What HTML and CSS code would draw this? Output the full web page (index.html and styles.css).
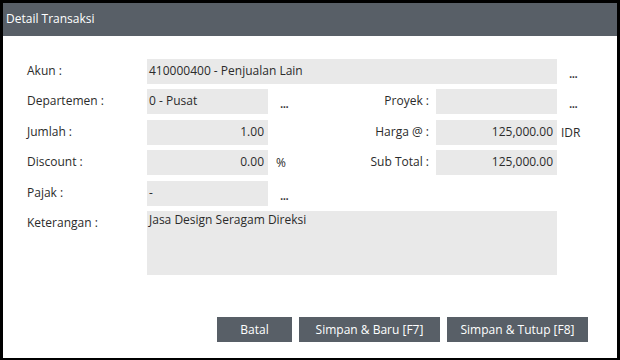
FILE: index.html
```html
<!DOCTYPE html>
<html>
	<head>
		<meta charset="UTF-8">
		<title>Detail Transaksi</title>
		<link rel="stylesheet" href="styles.css">
	</head>
	<body>
		<div class="window">
			<div class="title">Detail Transaksi</div>
			<div class="content">
				<div class="form">
					<label class="lbl">Akun :</label>
					<div class="field wide">410000400 - Penjualan Lain</div>
					<span class="dots">...</span>

					<label class="lbl">Departemen :</label>
					<div class="field">0 - Pusat</div>
					<div class="mid"><span class="dots">...</span><label class="rlbl">Proyek :</label></div>
					<div class="field"></div>
					<span class="dots">...</span>

					<label class="lbl">Jumlah :</label>
					<div class="field num">1.00</div>
					<div class="mid"><span></span><label class="rlbl">Harga @ :</label></div>
					<div class="field num">125,000.00</div>
					<span class="unit">IDR</span>

					<label class="lbl">Discount :</label>
					<div class="field num">0.00</div>
					<div class="mid"><span class="unit pct">%</span><label class="rlbl">Sub Total :</label></div>
					<div class="field num">125,000.00</div>
					<span></span>

					<label class="lbl">Pajak :</label>
					<div class="field">-</div>
					<div class="mid"><span class="dots">...</span></div>
					<span></span>
					<span></span>

					<label class="lbl">Keterangan :</label>
					<div class="field wide memo">Jasa Design Seragam Direksi</div>
					<span></span>
				</div>
				<div class="buttons">
					<button class="btn batal">Batal</button>
					<button class="btn">Simpan &amp; Baru [F7]</button>
					<button class="btn">Simpan &amp; Tutup [F8]</button>
				</div>
			</div>
		</div>
	</body>
</html>
```

FILE: styles.css
```css
*{
	margin: 0;
	padding: 0;
	box-sizing: border-box;
}
html,body{
	width: 620px;
	height: 360px;
	background: #000;
	overflow: hidden;
}
body{
	font-family: "Open Sans", "Noto Sans", sans-serif;
	font-size: 12px;
	color: #2b2b2b;
}
.window{
	margin: 3px 3px 2px 3px;
	width: 614px;
	height: 355px;
	background: #fff;
	display: flex;
	flex-direction: column;
}
.title{
	height: 33px;
	background: #585f67;
	color: #fff;
	font-size: 12px;
	line-height: 31px;
	padding-left: 3px;
}
.content{
	flex: 1;
	display: flex;
	flex-direction: column;
	padding: 23px 29px 16px 24px;
}
.form{
	display: grid;
	grid-template-columns: 120px 121px 168px 121px 1fr;
	grid-auto-rows: 25px;
	row-gap: 5.4px;
}
.lbl{
	padding-top: 3px;
	line-height: 17px;
}
.field{
	background: #e9e9e9;
	line-height: 23px;
	padding: 0 4px 0 2px;
	white-space: nowrap;
}
.field.wide{
	grid-column: 2 / 5;
}
.field.num{
	text-align: right;
}
.field.memo{
	grid-row: span 2;
	height: 64px;
	line-height: 16px;
	padding-top: 1px;
}
.mid{
	display: flex;
	justify-content: space-between;
	padding-right: 7px;
}
.rlbl{
	padding-top: 3px;
	line-height: 17px;
}
.dots{
	padding: 7px 0 0 12px;
	line-height: 16px;
	font-size: 12px;
	font-weight: 600;
	color: #333;
	letter-spacing: -0.5px;
}
.unit{
	padding-left: 4px;
	line-height: 25px;
}
.unit.pct{
	padding-left: 8px;
}
.buttons{
	margin-top: auto;
	display: flex;
	justify-content: flex-end;
	gap: 7px;
}
.btn{
	height: 25px;
	width: 141px;
	border: none;
	background: #585f67;
	color: #fff;
	font-family: "Open Sans", "Noto Sans", sans-serif;
	font-size: 12px;
}
.btn.batal{
	width: 75px;
}
```
